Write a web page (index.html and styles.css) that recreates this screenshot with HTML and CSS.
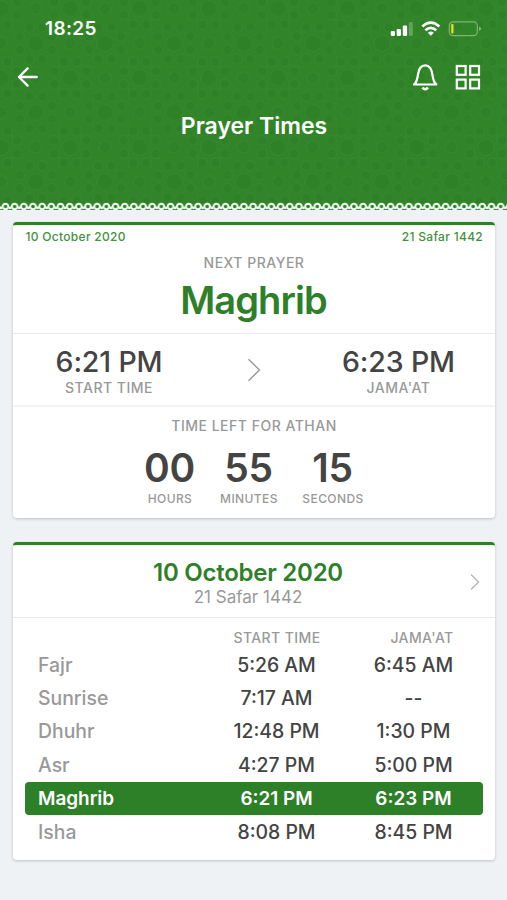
FILE: index.html
```html
<!DOCTYPE html>
<html lang="en">
<head>
<meta charset="utf-8">
<title>Prayer Times</title>
<link rel="stylesheet" href="styles.css">
</head>
<body>
<header class="hero">
  <svg class="pattern" width="507" height="211" aria-hidden="true">
    <defs>
      <g id="rosette">
        <circle r="8.3"/>
        <circle cx="16" cy="6.600" r="4.900"/><circle cx="6.600" cy="16" r="4.900"/>
        <circle cx="-6.600" cy="16" r="4.900"/><circle cx="-16" cy="6.600" r="4.900"/>
        <circle cx="-16" cy="-6.600" r="4.900"/><circle cx="-6.600" cy="-16" r="4.900"/>
        <circle cx="6.600" cy="-16" r="4.900"/><circle cx="16" cy="-6.600" r="4.900"/>
      </g>
      <pattern id="girih" width="69.3" height="69.3" patternUnits="userSpaceOnUse" patternTransform="translate(1 8.5)">
        <g fill="#2b7c24" fill-opacity=".4" stroke="#43933a" stroke-opacity=".3" stroke-width="1.200">
          <use href="#rosette"/><use href="#rosette" x="69.3"/><use href="#rosette" y="69.3"/><use href="#rosette" x="69.3" y="69.3"/>
          <use href="#rosette" x="34.65" y="34.65"/>
          <circle cx="34.65" cy="0" r="6"/><circle cx="34.65" cy="69.3" r="6"/>
          <circle cx="0" cy="34.65" r="6"/><circle cx="69.3" cy="34.65" r="6"/>
        </g>
        <path d="M0 34.65 34.65 0 69.3 34.65 34.65 69.3ZM11 0V69.3M58.300 0V69.3M0 11H69.3M0 58.300H69.3" fill="none" stroke="#3b8d32" stroke-opacity=".25" stroke-width=".8"/>
      </pattern>
      <pattern id="lace" width="9.17" height="12" patternUnits="userSpaceOnUse" patternTransform="translate(.9 201)">
        <circle cx="4.58" cy="5.500" r="2.800" fill="#2e8028" stroke="#f0f8f1" stroke-width="2"/>
        <circle cx="0" cy="6.700" r="1.500" fill="#eef7ef"/><circle cx="9.17" cy="6.700" r="1.500" fill="#eef7ef"/>
      </pattern>
    </defs>
    <rect width="507" height="210" fill="url(#girih)"/>
    <rect y="201" width="507" height="9" fill="url(#lace)"/>
  </svg>
  <div class="status">
    <span class="clock">18:25</span>
    <svg class="status-icons" width="94" height="20" viewBox="0 0 94 20" aria-hidden="true">
      <g fill="#fff"><rect x=".8" y="11" width="4.2" height="5" rx="1.2"/><rect x="6.7" y="9" width="4.3" height="7" rx="1.2"/><rect x="12.8" y="5.6" width="4.3" height="10.4" rx="1.2"/><rect x="18.8" y="2" width="4" height="14" rx="1.2" opacity=".25"/></g>
      <g fill="none" stroke="#fff" stroke-width="2.700"><path d="M32.3 6.500Q40.8-1.300 49.3 6.500"/><path d="M35.400 10.2Q40.8 5.400 46.200 10.2"/></g>
      <path d="M37.8 12.7Q40.8 10.5 43.8 12.7L40.8 15.8Z" fill="#fff"/>
      <rect x="59.3" y="1.900" width="28" height="13.7" rx="3.8" fill="none" stroke="#7cb574" stroke-width="1.2"/>
      <path d="M89 6.400Q91.2 7.300 91.2 8.700T89 11Z" fill="#7cb574"/>
      <rect x="61.2" y="4.100" width="2.3" height="9.4" rx="1" fill="#e8df20"/>
    </svg>
  </div>
  <nav class="toolbar">
    <svg width="22" height="22" viewBox="0 0 22 22" fill="none" stroke="#fff" stroke-width="2.300" stroke-linecap="round" stroke-linejoin="round" aria-hidden="true"><path d="M19.800 11H2M10.600 2.400 2 11l8.600 8.600"/></svg>
    <svg class="actions" width="70" height="30" viewBox="0 0 70 30" fill="none" stroke="#fff" stroke-width="2.200" aria-hidden="true">
      <path d="M1.100 22.500H23.300C20.600 20.500 20.100 17.500 19.500 13 18.900 7.800 17.100 3.300 12.200 3.300S5.500 7.800 4.900 13C4.300 17.500 3.800 20.500 1.100 22.500Z" stroke-linejoin="round"/>
      <path d="M9.400 25.700Q12.200 28.700 15 25.700" stroke-width="2.500"/>
      <rect x="43.800" y="4" width="8.800" height="8.800"/><rect x="57.200" y="4" width="8.800" height="8.800"/><rect x="43.800" y="17.600" width="8.800" height="8.800"/><rect x="57.200" y="17.600" width="8.800" height="8.800"/>
    </svg>
  </nav>
  <h1 class="title">Prayer Times</h1>
</header>
<main class="cards">
  <section class="card next">
    <div class="dates"><span>10 October 2020</span><span>21 Safar 1442</span></div>
    <div class="label next-label">NEXT PRAYER</div>
    <h2 class="prayer">Maghrib</h2>
    <div class="slots">
      <div class="slot"><div class="slot-time">6:21 PM</div><div class="label">START TIME</div></div>
      <svg class="slot-arrow" width="14" height="24" viewBox="0 0 14 24" fill="none" stroke="#999" stroke-width="1.4" aria-hidden="true"><path d="m1.500 1.300 11 10.700-11 10.700"/></svg>
      <div class="slot"><div class="slot-time">6:23 PM</div><div class="label">JAMA'AT</div></div>
    </div>
    <div class="countdown">
      <div class="label left-label">TIME LEFT FOR ATHAN</div>
      <div class="units">
        <div class="unit"><div class="num">00</div><div class="unit-name">HOURS</div></div>
        <div class="unit"><div class="num">55</div><div class="unit-name">MINUTES</div></div>
        <div class="unit"><div class="num">15</div><div class="unit-name">SECONDS</div></div>
      </div>
    </div>
  </section>
  <section class="card day">
    <div class="day-head">
      <h2 class="day-date">10 October 2020</h2>
      <div class="hijri">21 Safar 1442</div>
      <svg class="day-arrow" width="10" height="18" viewBox="0 0 10 18" fill="none" stroke="#b5b5b5" stroke-width="1.300" aria-hidden="true"><path d="m1 1.500 7.500 7.500L1 16.500"/></svg>
    </div>
    <div class="table">
      <div class="row head"><span></span><span>START TIME</span><span class="jamaat-head">JAMA'AT</span></div>
      <div class="row"><span class="name">Fajr</span><span>5:26 AM</span><span>6:45 AM</span></div>
      <div class="row"><span class="name">Sunrise</span><span>7:17 AM</span><span>--</span></div>
      <div class="row"><span class="name">Dhuhr</span><span>12:48 PM</span><span>1:30 PM</span></div>
      <div class="row"><span class="name">Asr</span><span>4:27 PM</span><span>5:00 PM</span></div>
      <div class="row current"><span class="name">Maghrib</span><span>6:21 PM</span><span>6:23 PM</span></div>
      <div class="row"><span class="name">Isha</span><span>8:08 PM</span><span>8:45 PM</span></div>
    </div>
  </section>
</main>
</body>
</html>
```
FILE: styles.css
```css
* { box-sizing: border-box; }
body {
  margin: 0;
  height: 900px;
  overflow: hidden;
  background: #eef2f5;
  color: #444;
  font-family: Inter, "Liberation Sans", sans-serif;
  font-weight: 500;
}
h1, h2 { margin: 0; }
svg { display: block; }

.hero { position: relative; height: 210px; background: #318428; color: #fff; }
.pattern { position: absolute; left: 0; top: 0; }
.status, .toolbar, .title { position: relative; }
.status { height: 56px; padding: 18px 25px 0 45px; display: flex; justify-content: space-between; }
.clock { font-size: 19px; line-height: 22px; font-weight: 600; letter-spacing: .35px; }
.status-icons { margin-top: 2px; margin-right: -2px; }
.toolbar { height: 44px; padding: 0 24px 2px 17px; display: flex; justify-content: space-between; align-items: center; }
.title { margin-top: 11px; text-align: center; font-size: 23px; line-height: 30px; font-weight: 600; padding-left: 1px; }

.cards { padding: 12px 12px 0 13px; display: flex; flex-direction: column; gap: 24px; }
.card { background: #fff; border-top: 3px solid #2e8028; border-radius: 4px; box-shadow: 0 1px 3px rgba(0,0,0,.2); }
.label { font-size: 14px; line-height: 18px; color: #999; letter-spacing: .5px; text-align: center; }

.next { height: 296px; }
.dates { display: flex; justify-content: space-between; padding: 4px 12px 0 12.5px; font-size: 12px; line-height: 16px; color: #439040; letter-spacing: .3px; }
.next-label { margin-top: 9px; }
.prayer { height: 61px; padding-top: 5px; text-align: center; color: #2e8028; font-size: 38px; line-height: 46px; font-weight: 600; letter-spacing: -.9px; padding-right: 1px; }
.slots { height: 74px; border-top: 1px solid #e9e9e9; border-bottom: 2px solid #f3f3f3; display: grid; grid-template-columns: 192px 98px 191px; }
.slot { padding-top: 11px; }
.slot-time { text-align: center; font-size: 28.5px; line-height: 34px; letter-spacing: -.15px; }
.slot-arrow { margin: 24px auto 0; }
.countdown { padding-top: 10px; }
.units { display: grid; grid-template-columns: 79px 79px 89px; justify-content: center; }
.unit { text-align: center; }
.num { font-size: 39px; line-height: 48px; font-weight: 600; margin-top: 9px; letter-spacing: -.3px; padding-right: 1px; }
.unit-name { font-size: 12px; line-height: 16px; color: #999; letter-spacing: .4px; margin-top: -1px; }

.day { height: 318px; }
.day-head { position: relative; height: 73px; border-bottom: 1px solid #e9e9e9; text-align: center; padding: 13px 12px 0 0; }
.day-date { font-size: 24px; line-height: 29px; font-weight: 600; color: #2e8028; letter-spacing: -.25px; }
.hijri { font-size: 17px; line-height: 20px; font-weight: 400; color: #999; }
.day-arrow { position: absolute; right: 15px; top: 28px; }
.table { padding: 8px 12px; }
.row { display: grid; grid-template-columns: 183px 137px 137px; height: 33.4px; align-items: center; text-align: center; font-size: 19.4px; border-radius: 4px; }
.name { text-align: left; padding-left: 13px; color: #999; }
.head { height: 22px; font-size: 14px; color: #999; letter-spacing: .4px; padding-left: .5px; }
.current { background: #2e8028; color: #fff; font-weight: 600; font-size: 18.9px; }
.current .name { color: #fff; }
.jamaat-head { padding-left: 16px; }
```
